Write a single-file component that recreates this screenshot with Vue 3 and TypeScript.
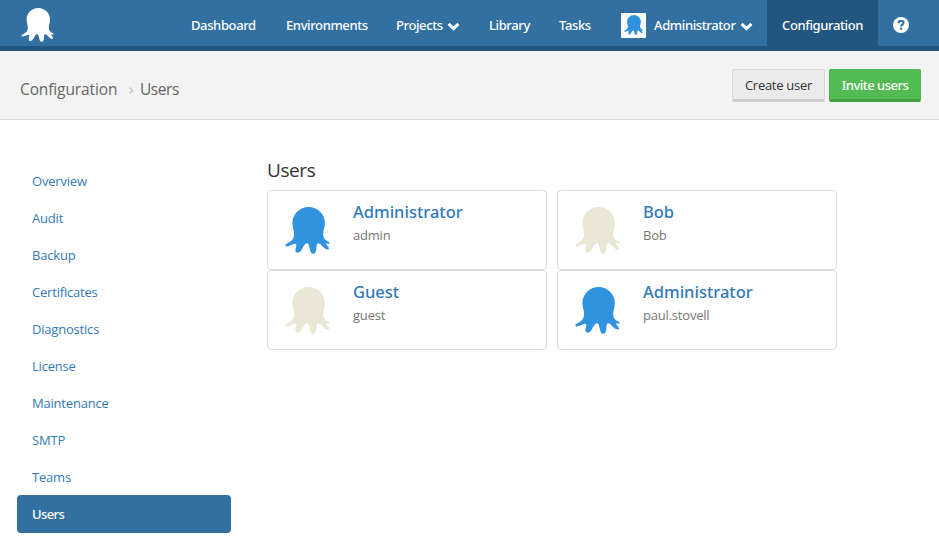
<script setup lang="ts">
import { defineComponent, h } from 'vue'

interface NavItem {
  label: string
  caret?: boolean
  avatar?: boolean
  active?: boolean
}

interface User {
  name: string
  login: string
  enabled: boolean
}

const navItems: NavItem[] = [
  { label: 'Dashboard' },
  { label: 'Environments' },
  { label: 'Projects', caret: true },
  { label: 'Library' },
  { label: 'Tasks' },
  { label: 'Administrator', caret: true, avatar: true },
  { label: 'Configuration', active: true },
]

const sections: string[] = [
  'Overview', 'Audit', 'Backup', 'Certificates', 'Diagnostics',
  'License', 'Maintenance', 'SMTP', 'Teams', 'Users',
]
const currentSection = 'Users'

const users: User[] = [
  { name: 'Administrator', login: 'admin', enabled: true },
  { name: 'Bob', login: 'Bob', enabled: false },
  { name: 'Guest', login: 'guest', enabled: false },
  { name: 'Administrator', login: 'paul.stovell', enabled: true },
]

const octopusPath =
  'M23.3 0C32.5 0 39.7 7.2 39.7 15.7C39.7 20.7 38 23.7 38 27.2C38 32.2 41.5 33.7 44 35C45 35.7 44.5 37 43.5 36.8' +
  'C42.5 36.7 41.5 36.2 40.8 36.3C41.2 38.2 44 40.2 43.8 41.7C43.6 42.9 41.5 42.7 40 41.7C37 39.7 35.3 36.3 33.3 36.3' +
  'C31.2 36.3 31.5 39.2 31.2 41.7C31 44.7 29.8 46.8 28.2 46.8C26 46.8 25.2 44.2 24.6 41.7C24 39.2 23.5 36.3 22 36.3' +
  'C19.8 36.3 18.5 39.2 16.8 42.2C15.5 44.7 13.5 46.2 11.5 45.6C9.5 44.7 10.3 41.7 11 39.2C11.3 37.7 11.3 37.2 10.5 36.9' +
  'C8.5 36.5 5 39.2 2 39.5C.3 39.7-.2 38.3.8 37.3C3.5 35.2 9 33.7 9 27.2C9 23.7 7.3 20.7 7.3 15.7C7.3 7.2 14.5 0 23.3 0Z'

const Octopus = defineComponent(() => () =>
  h('svg', { viewBox: '0 0 44.7 47', 'aria-hidden': 'true' }, [h('path', { d: octopusPath, fill: 'currentColor' })]),
)
</script>

<template>
  <div class="page">
    <header class="topbar">
      <a class="brand"><Octopus class="brand-logo" /></a>
      <nav class="nav">
        <a v-for="item in navItems" :key="item.label" class="nav-item" :class="{ active: item.active }">
          <span v-if="item.avatar" class="nav-avatar"><Octopus class="nav-octopus" /></span>
          <span class="nav-label">{{ item.label }}</span>
          <svg v-if="item.caret" class="caret" viewBox="0 0 13 9">
            <path d="M1.6 1.9 6.5 6.6 11.4 1.9" fill="none" stroke="currentColor" stroke-width="3" />
          </svg>
        </a>
        <a class="nav-item">
          <svg class="help" viewBox="0 0 16 16">
            <circle cx="8" cy="8" r="8" fill="#fff" />
            <path d="M5.5 6.2C5.6 4.5 6.6 3.7 8.1 3.7C9.6 3.7 10.6 4.6 10.6 5.8C10.6 7.6 8.1 7.6 8.1 9.6" fill="none" stroke="#3270a2" stroke-width="2" />
            <path d="M7 10.7h2.1v2H7z" fill="#3270a2" />
          </svg>
        </a>
      </nav>
    </header>

    <section class="heading">
      <div class="breadcrumb">
        <span class="crumb-parent">Configuration</span>
        <svg class="crumb-sep" viewBox="0 0 5 7">
          <path d="M.8.7 3.7 3.5.8 6.3" fill="none" stroke="#c8cacc" stroke-width="1.7" />
        </svg>
        <span class="crumb-current">Users</span>
      </div>
      <div class="actions">
        <button class="btn create">Create user</button>
        <button class="btn invite">Invite users</button>
      </div>
    </section>

    <div class="body">
      <aside class="sidebar">
        <a v-for="s in sections" :key="s" class="side-item" :class="{ selected: s === currentSection }">{{ s }}</a>
      </aside>
      <main class="content">
        <h1 class="title">Users</h1>
        <div class="grid">
          <article v-for="u in users" :key="u.login" class="card">
            <Octopus class="card-octopus" :class="{ disabled: !u.enabled }" />
            <div class="card-text">
              <a class="user-name">{{ u.name }}</a>
              <span class="user-login">{{ u.login }}</span>
            </div>
          </article>
        </div>
      </main>
    </div>
  </div>
</template>

<style>
body {
  background: #fff;
}
</style>

<style scoped>
.page {
  height: 558px;
  overflow: hidden;
  font-family: "Open Sans", "Noto Sans", sans-serif;
  font-size: 13px;
  letter-spacing: -0.2px;
  color: #333;
}
.topbar {
  box-sizing: border-box;
  height: 51px;
  display: flex;
  justify-content: space-between;
  padding: 0 16px 0 21px;
  background: #3270a2;
  border-bottom: 5px solid #20567f;
}
.brand {
  padding-top: 8px;
  color: #fff;
}
.brand-logo {
  display: block;
  width: 33px;
  height: 34px;
}
.nav {
  display: grid;
  grid-template-columns: 95px 110px 93px 70px 62px 161px 111px 45px;
}
.nav-item {
  box-sizing: border-box;
  height: 46px;
  padding: 4px 0 0 15px;
  display: flex;
  align-items: center;
  color: #fff;
  font-family: "Noto Sans", sans-serif;
  font-weight: 500;
  letter-spacing: -0.38px;
  white-space: nowrap;
}
.nav-item.active {
  background: #20567f;
}
.nav-avatar {
  width: 25px;
  height: 25px;
  margin-right: 8px;
  display: flex;
  justify-content: center;
  align-items: center;
  border-radius: 1px;
  background: #fff;
}
.nav-octopus {
  width: 19px;
  height: 20px;
  color: #2f93e0;
}
.caret {
  width: 13px;
  height: 9px;
  margin: 2px 0 0 4px;
}
.help {
  width: 16px;
  height: 16px;
}
.heading {
  box-sizing: border-box;
  height: 69px;
  display: flex;
  justify-content: space-between;
  padding: 18px 18px 0 20px;
  background: #f3f3f3;
  border-bottom: 1px solid #d6d6d6;
}
.breadcrumb {
  height: 39px;
  display: flex;
  align-items: center;
  font-size: 15.5px;
  color: #666;
}
.crumb-parent {
  width: 97px;
  letter-spacing: -0.12px;
}
.crumb-current {
  letter-spacing: -0.45px;
}
.crumb-sep {
  width: 5px;
  height: 7px;
  margin: 3px 6px 0 12px;
}
.actions {
  display: flex;
  gap: 4px;
}
.btn {
  box-sizing: border-box;
  height: 33px;
  padding: 1px 0 0;
  border-radius: 2px;
  font: inherit;
  letter-spacing: -0.27px;
  white-space: nowrap;
}
.create {
  width: 93px;
  color: #333;
  background: #ebebeb;
  border: 1px solid #d9d9d9;
  border-bottom: 3px solid #cdcdcd;
}
.invite {
  width: 92px;
  color: #fff;
  font-family: "Noto Sans", sans-serif;
  font-weight: 500;
  letter-spacing: -0.5px;
  background: #53bb53;
  border: 1px solid #4fb54f;
  border-bottom: 3px solid #419f41;
}
.body {
  display: flex;
  gap: 36px;
  padding: 42px 0 0 17px;
}
.sidebar {
  width: 214px;
}
.side-item {
  box-sizing: border-box;
  height: 37px;
  padding-left: 15px;
  display: flex;
  align-items: center;
  color: #337ab7;
}
.side-item.selected {
  height: 38px;
  color: #fff;
  font-family: "Noto Sans", sans-serif;
  font-weight: 500;
  letter-spacing: -0.6px;
  background: #3270a2;
  border-radius: 4px;
}
.title {
  margin: 0;
  height: 28px;
  line-height: 17px;
  font-size: 19px;
  font-weight: 400;
  letter-spacing: -0.4px;
}
.grid {
  display: grid;
  grid-template-columns: 280px 280px;
  column-gap: 10px;
}
.card {
  box-sizing: border-box;
  height: 80px;
  display: flex;
  padding: 0 0 0 17px;
  border: 1px solid #dcdcdc;
  border-radius: 4px;
}
.card-octopus {
  width: 45px;
  height: 47px;
  margin: 16px 23px 0 0;
  color: #2f93e0;
}
.card-octopus.disabled {
  color: #eae7d6;
}
.card-text {
  display: flex;
  flex-direction: column;
}
.user-name {
  margin-top: 9px;
  line-height: 24px;
  font-family: "Noto Sans", sans-serif;
  font-size: 16.5px;
  font-weight: 500;
  letter-spacing: 0;
  color: #337ab7;
}
.user-login {
  line-height: 22px;
  color: #777;
}
</style>
